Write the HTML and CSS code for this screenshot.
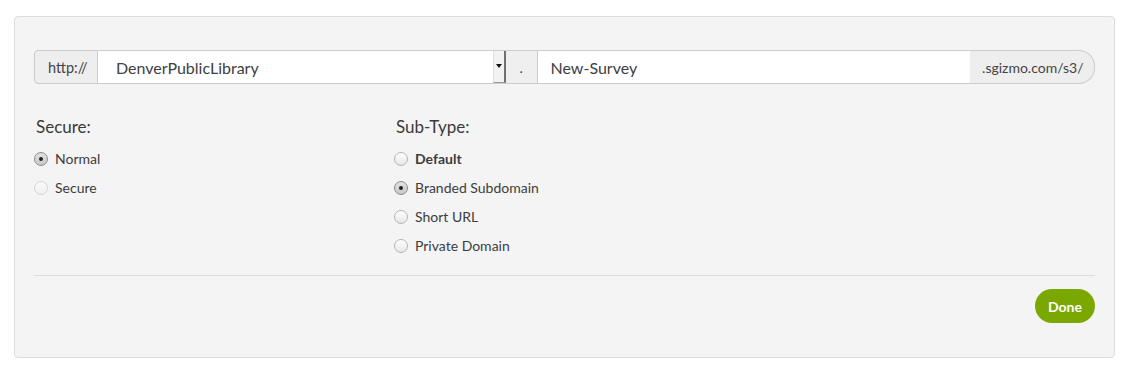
FILE: index.html
```html
<!DOCTYPE html>
<html lang="en">
<head>
    <meta charset="UTF-8">
    <meta name="viewport" content="width=device-width, initial-scale=1.0">
    <title>Survey Link</title>
    <link rel="stylesheet" href="styles.css">
</head>
<body>
    <div class="panel">
        <div class="url-group">
            <span class="addon addon-first">http://</span>
            <div class="field field-select">
                <span class="field-text select-text">DenverPublicLibrary</span>
                <span class="select-arrow"></span>
            </div>
            <span class="addon addon-dot">.</span>
            <div class="field field-name">
                <span class="field-text">New-Survey</span>
            </div>
            <span class="addon addon-last">.sgizmo.com/s3/</span>
        </div>

        <div class="options">
            <div class="option-col">
                <h3>Secure:</h3>
                <label class="radio"><span class="dot checked"></span>Normal</label>
                <label class="radio"><span class="dot faded"></span>Secure</label>
            </div>
            <div class="option-col">
                <h3>Sub-Type:</h3>
                <label class="radio bold"><span class="dot"></span>Default</label>
                <label class="radio"><span class="dot checked"></span>Branded Subdomain</label>
                <label class="radio"><span class="dot"></span>Short URL</label>
                <label class="radio"><span class="dot"></span>Private Domain</label>
            </div>
        </div>

        <div class="footer">
            <button class="done">Done</button>
        </div>
    </div>
</body>
</html>
```

FILE: styles.css
```css
body {
    margin: 0;
    padding: 16px 16px 0 14px;
    background-color: #ffffff;
    font-family: Lato, "Open Sans", sans-serif;
    color: #3d3d3d;
}
.panel {
    width: 1101px;
    height: 342px;
    box-sizing: border-box;
    background-color: #f4f4f4;
    border: 1px solid #dddddd;
    border-radius: 4px;
    padding: 33px 19px 0 19px;
}
.url-group {
    display: flex;
    height: 34px;
}
.addon {
    display: flex;
    align-items: center;
    box-sizing: border-box;
    background-color: #eeeeee;
    border: 1px solid #cccccc;
    font-size: 14px;
    color: #444444;
}
.addon-first {
    width: 64px;
    padding-left: 13px;
    font-size: 14.5px;
    border-radius: 4px 0 0 4px;
}
.addon-dot {
    width: 31px;
    justify-content: center;
    border-left: none;
    border-right: none;
    background-color: #efefef;
}
.addon-last {
    width: 125px;
    padding-left: 12px;
    border-left: none;
    border-radius: 0 16px 16px 0;
}
.field {
    display: flex;
    align-items: center;
    box-sizing: border-box;
    background-color: #ffffff;
    border-top: 1px solid #cccccc;
    border-bottom: 1px solid #cccccc;
}
.field-select {
    width: 408px;
    padding-left: 18px;
    justify-content: space-between;
}
.field-name {
    width: 434px;
    padding-left: 13px;
    border-left: 1px solid #cccccc;
}
.field-text {
    font-size: 16px;
    color: #404040;
}
.select-arrow {
    position: relative;
    align-self: stretch;
    width: 13px;
    box-sizing: border-box;
    background-color: #f2f2f2;
    border-left: 1px solid #e0e0e0;
    border-right: 2px solid #707070;
    border-bottom: 1px solid #9a9a9a;
}
.select-arrow::after {
    content: "";
    position: absolute;
    left: 2px;
    top: 13px;
    border-left: 3px solid transparent;
    border-right: 3px solid transparent;
    border-top: 4px solid #111111;
}
.options {
    display: grid;
    grid-template-columns: 360px 1fr;
    padding-top: 32px;
    height: 192px;
    box-sizing: border-box;
    border-bottom: 1px solid #dddddd;
}
.option-col h3 {
    margin: 0 0 6px 2px;
    font-size: 17px;
    font-weight: normal;
    color: #3a3a3a;
    line-height: 22px;
}
.radio {
    display: flex;
    align-items: center;
    height: 29px;
    font-size: 14px;
    color: #3d3d3d;
}
.radio.bold {
    font-weight: bold;
}
.dot {
    width: 12px;
    height: 12px;
    border-radius: 50%;
    border: 1px solid #b5b5b5;
    background: linear-gradient(#ffffff, #e6e6e6);
    margin-right: 7px;
    display: flex;
    align-items: center;
    justify-content: center;
}
.dot.faded {
    border-color: #d4d4d4;
    background: linear-gradient(#fbfbfb, #efefef);
}
.dot.checked {
    border-color: #8c8c8c;
    background: linear-gradient(#e2e2e2, #c9c9c9);
}
.dot.checked::after {
    content: "";
    width: 4px;
    height: 4px;
    border-radius: 50%;
    background-color: #222222;
}
.footer {
    display: flex;
    justify-content: flex-end;
    padding-top: 13px;
}
.done {
    width: 60px;
    height: 34px;
    border: none;
    border-radius: 17px;
    background-color: #7aa800;
    color: #ffffff;
    font-family: Lato, sans-serif;
    font-size: 14px;
    font-weight: bold;
    cursor: pointer;
}
```
